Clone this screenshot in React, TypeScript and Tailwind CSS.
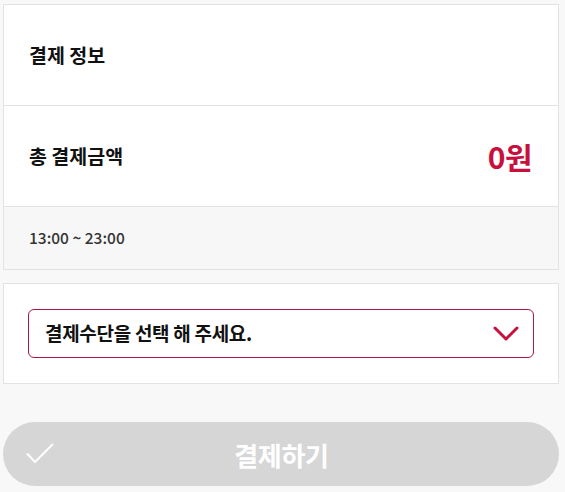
export default function App() {
  return (
    <div
      className="min-h-[492px] w-[565px] bg-[#f8f8f8] px-[3px] pt-[4px] text-[#111]"
      style={{ fontFamily: '"Noto Sans CJK KR", "Noto Sans", sans-serif' }}
    >
      <div className="w-[556px] border border-[#e3e3e3] bg-white">
        <div className="flex h-[100px] items-center px-[25px]">
          <h2 className="text-[19.5px] font-bold">결제 정보</h2>
        </div>
        <div className="flex h-[101px] items-center justify-between border-t border-[#e3e3e3] pl-[25px] pr-[26px]">
          <span className="text-[19.5px] font-bold">총 결제금액</span>
          <span className="text-[30px] font-bold tracking-[-0.5px] text-[#c8103e]">0원</span>
        </div>
        <div className="flex h-[63px] items-center border-t border-[#e3e3e3] bg-[#f7f7f7] px-[25px]">
          <span className="text-[15.5px] font-medium text-[#333]">13:00 ~ 23:00</span>
        </div>
      </div>

      <div className="mt-[13px] w-[556px] border border-[#e3e3e3] bg-white px-[24px] py-[25px]">
        <button className="flex h-[49px] w-full items-center justify-between rounded-[6px] border border-[#a8184a] bg-white pl-[16px] pr-[14px]">
          <span className="text-[19px] font-bold tracking-[-0.3px]">결제수단을 선택 해 주세요.</span>
          <svg width="26" height="16" viewBox="0 0 26 16" fill="none">
            <polyline
              points="2,2 13,13 24,2"
              stroke="#c8103e"
              strokeWidth="3"
              strokeLinecap="round"
              strokeLinejoin="round"
            />
          </svg>
        </button>
      </div>

      <div className="mt-[38px] flex h-[64px] w-[556px] items-center rounded-full bg-[#d6d6d6] pl-[23px] pr-[22px]">
        <svg width="28" height="22" viewBox="0 0 28 22" fill="none">
          <polyline
            points="1.5,11 9,19 26.5,1.5"
            stroke="#ffffff"
            strokeWidth="2"
            strokeLinecap="round"
            strokeLinejoin="round"
          />
        </svg>
        <span className="flex-1 pr-[28px] text-center text-[26px] font-bold tracking-[-0.3px] text-white">
          결제하기
        </span>
      </div>
    </div>
  );
}
